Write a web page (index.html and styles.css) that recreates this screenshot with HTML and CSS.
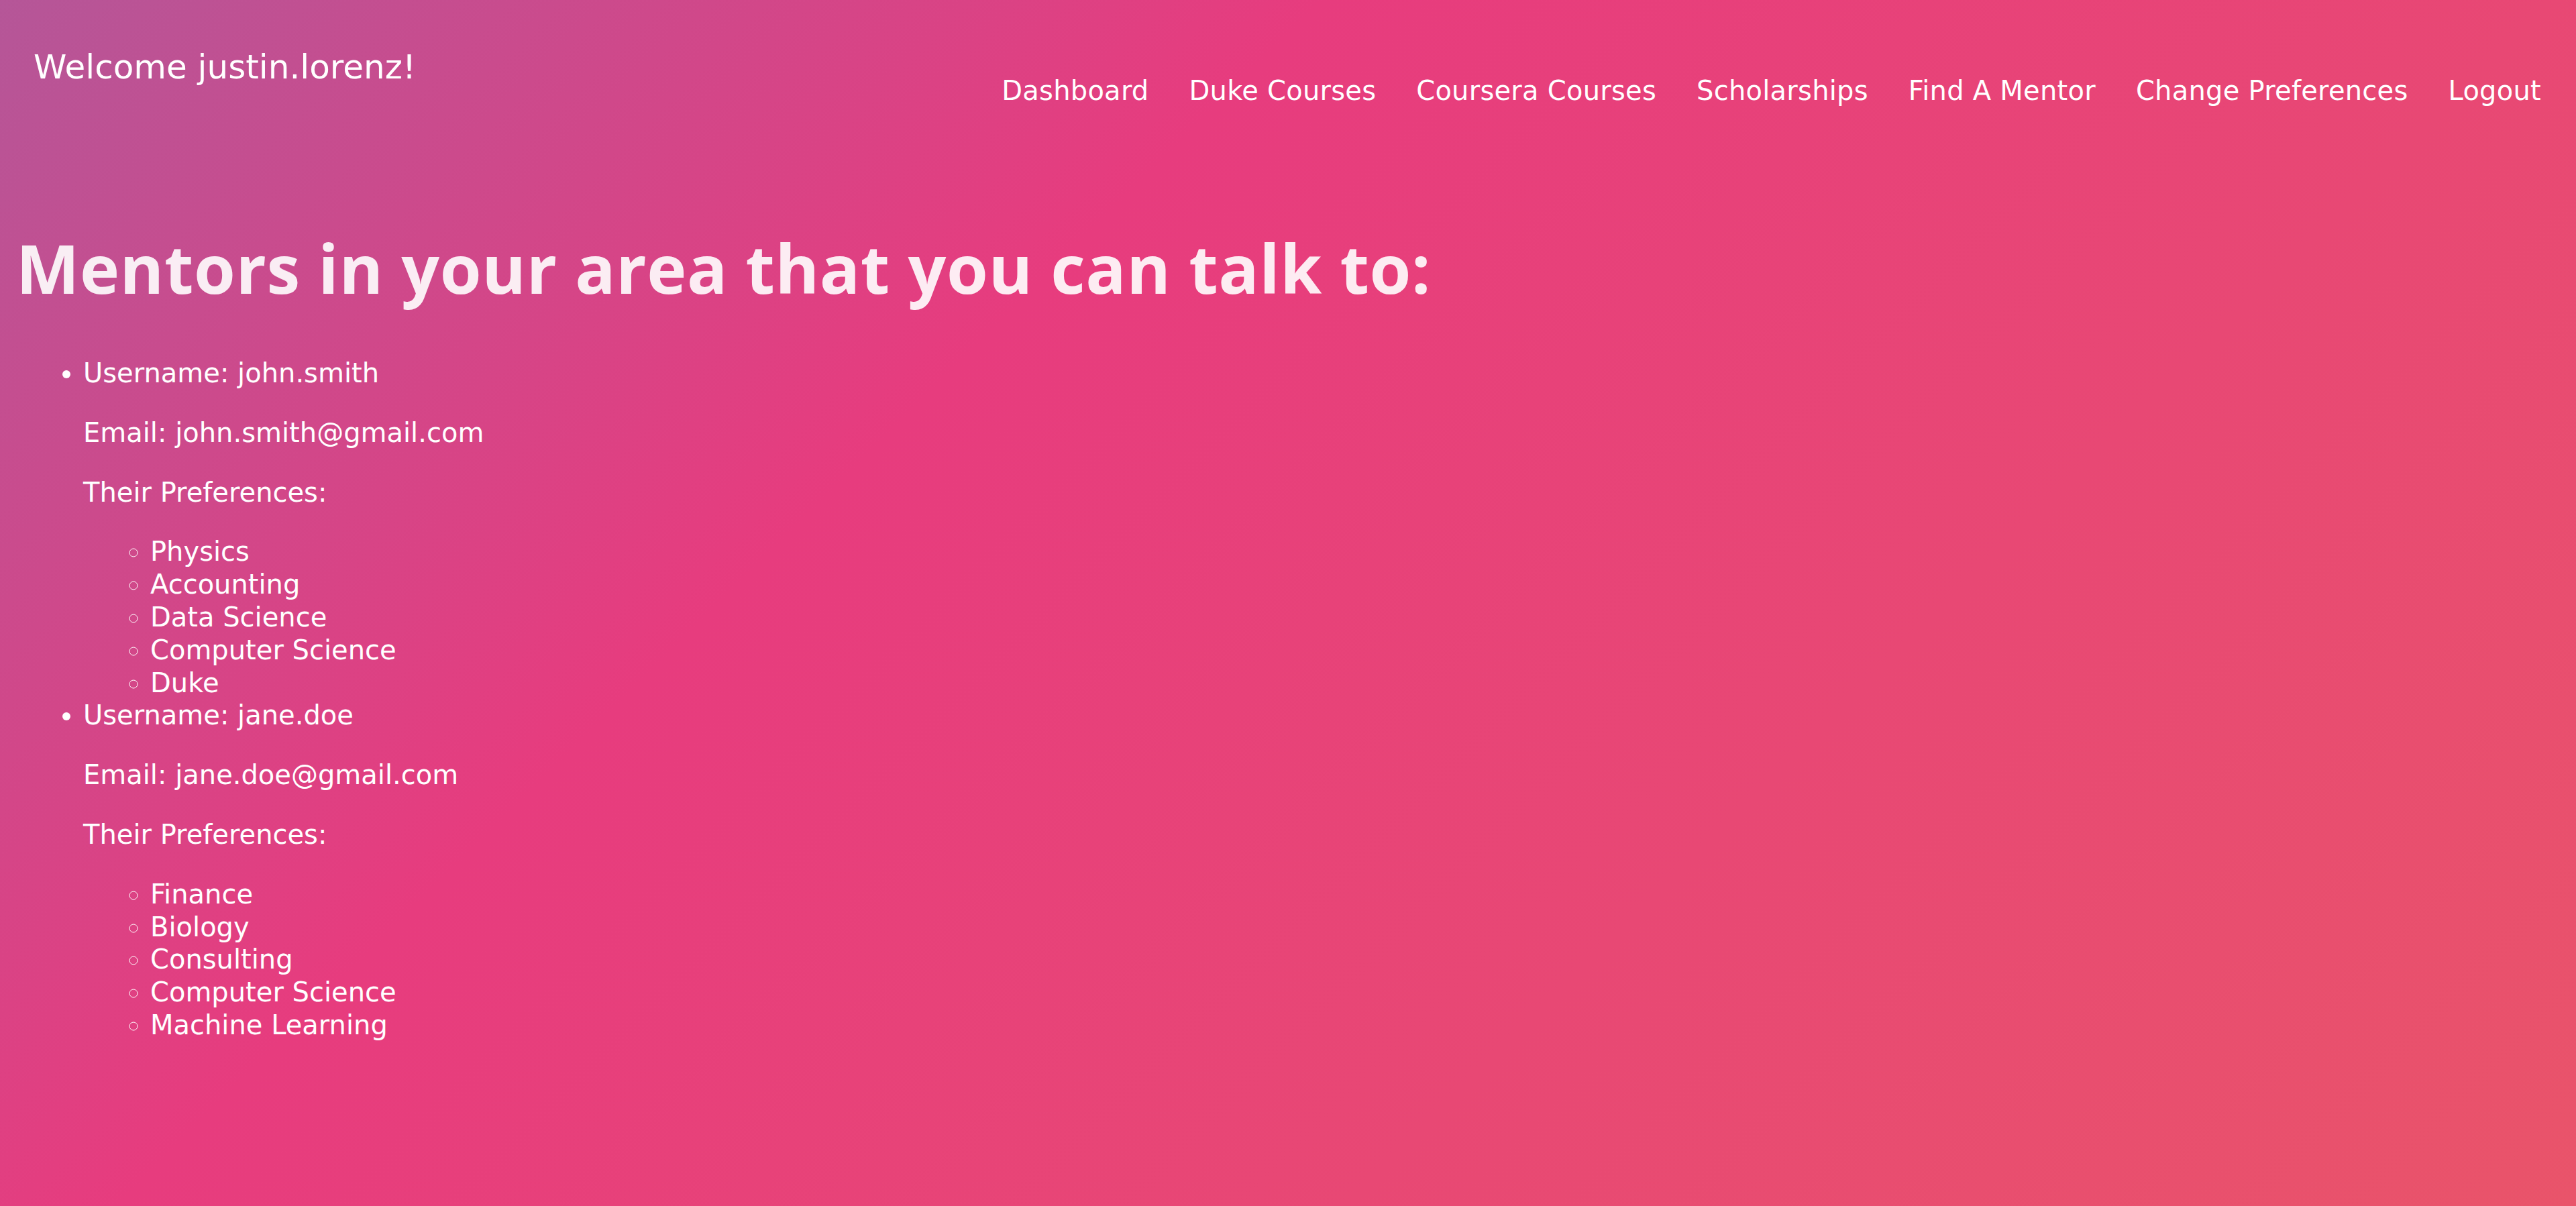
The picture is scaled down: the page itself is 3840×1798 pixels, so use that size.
FILE: index.html
```html
<!DOCTYPE html>
<html lang="en">
<head>
<meta charset="utf-8">
<title>Find A Mentor</title>
<link rel="stylesheet" href="styles.css">
</head>
<body>
<header class="topbar">
  <div class="welcome">Welcome justin.lorenz!</div>
  <nav class="nav">
    <a class="nav-link" href="#">Dashboard</a>
    <a class="nav-link" href="#">Duke Courses</a>
    <a class="nav-link" href="#">Coursera Courses</a>
    <a class="nav-link" href="#">Scholarships</a>
    <a class="nav-link" href="#">Find A Mentor</a>
    <a class="nav-link" href="#">Change Preferences</a>
    <a class="nav-link" href="#">Logout</a>
  </nav>
</header>
<main class="content">
  <h1 class="title">Mentors in your area that you can talk to:</h1>
  <ul class="mentors">
    <li>Username: john.smith
      <p>Email: john.smith@gmail.com</p>
      <p>Their Preferences:</p>
      <ul class="prefs">
        <li>Physics</li>
        <li>Accounting</li>
        <li>Data Science</li>
        <li>Computer Science</li>
        <li>Duke</li>
      </ul>
    </li>
    <li>Username: jane.doe
      <p>Email: jane.doe@gmail.com</p>
      <p>Their Preferences:</p>
      <ul class="prefs">
        <li>Finance</li>
        <li>Biology</li>
        <li>Consulting</li>
        <li>Computer Science</li>
        <li>Machine Learning</li>
      </ul>
    </li>
  </ul>
</main>
</body>
</html>
```

FILE: styles.css
```css
html {
  min-height: 100%;
  background: linear-gradient(135deg, rgb(181, 86, 152) 0%, #e73c7e 35%, rgb(233, 84, 106) 100%);
}

body {
  margin: 0;
  min-height: 1798px;
  color: #ffffff;
  font-family: "DejaVu Sans", "Open Sans", sans-serif;
}

.topbar {
  display: flex;
  justify-content: space-between;
  align-items: flex-start;
  padding: 70px 52px 0 50px;
}

.welcome {
  font-size: 50px;
  line-height: 60px;
}

.nav {
  display: flex;
  gap: 60px;
  margin-top: 41px;
}

.nav-link {
  color: #ffffff;
  text-decoration: none;
  font-size: 40px;
  line-height: 48px;
  letter-spacing: 0.25px;
}

.content {
  padding: 0 24px;
}

.title {
  margin: 180px 0 0;
  font-family: "Open Sans", "DejaVu Sans", sans-serif;
  font-size: 100px;
  line-height: 120px;
  font-weight: 700;
  letter-spacing: 0.6px;
  color: rgba(255, 255, 255, 0.9);
}

.mentors {
  margin: 73px 0 0;
  padding-left: 100px;
  font-size: 40px;
  line-height: 48.8px;
}

.mentors p {
  margin: 40px 0;
}

.prefs {
  margin: 0;
  padding-left: 100px;
  list-style: circle;
}
```
